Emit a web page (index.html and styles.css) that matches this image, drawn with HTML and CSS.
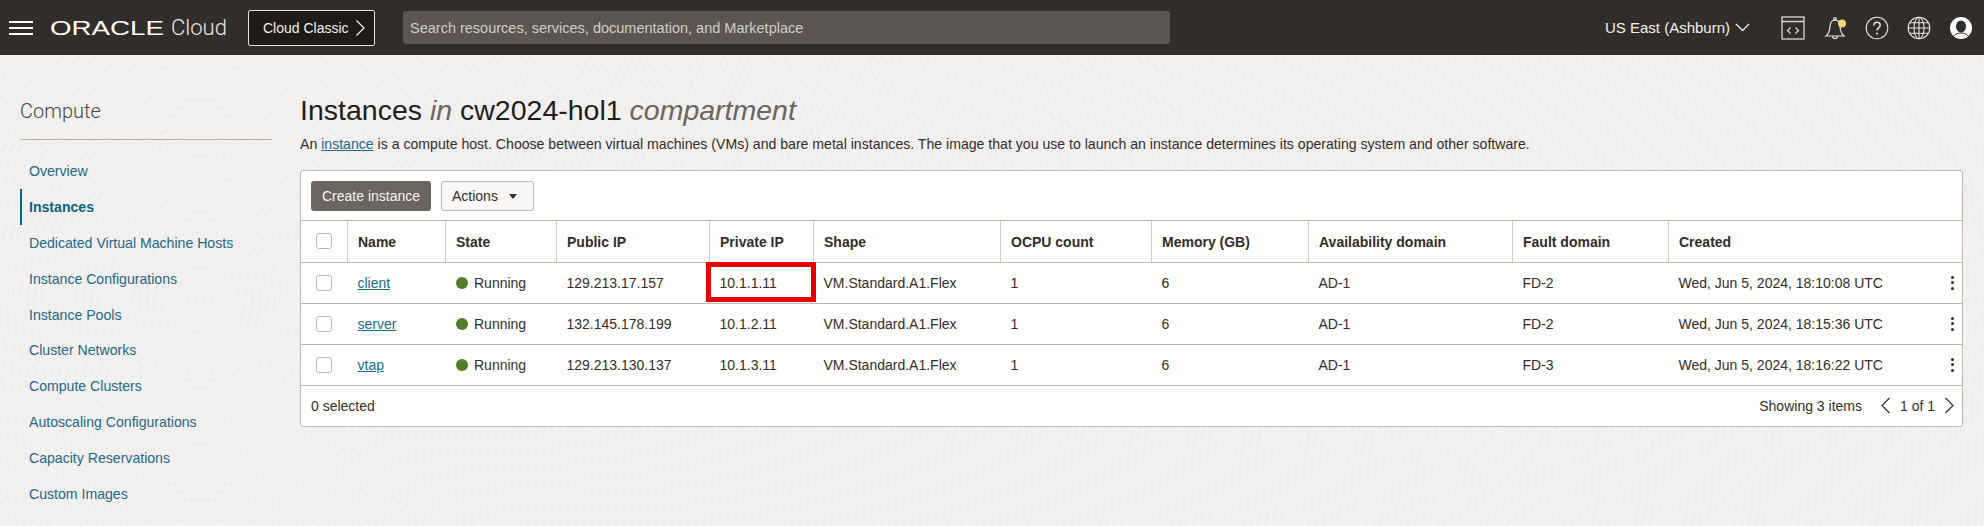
FILE: index.html
```html
<!DOCTYPE html>
<html>
<head>
  <meta charset="UTF-8">
  <title>Instances | Oracle Cloud</title>
  <link rel="stylesheet" href="styles.css">
</head>
<body>
  <header class="topbar">
    <button class="menu-btn" aria-label="Menu"><span></span><span></span><span></span></button>
    <div class="brand">
      <span class="brand-box"><span class="brand-oracle">ORACLE</span></span>
      <span class="brand-cloud">Cloud</span>
    </div>
    <button class="classic-btn">Cloud Classic
      <svg width="10" height="18" viewBox="0 0 10 18"><path d="M1.5 1.5 9 9l-7.500 7.500" fill="none" stroke="#f2f1ef" stroke-width="1.300"/></svg>
    </button>
    <div class="search">Search resources, services, documentation, and Marketplace</div>
    <div class="region">US East (Ashburn)
      <svg width="15" height="9" viewBox="0 0 15 9"><path d="M1 1l6.500 6.500L14 1" fill="none" stroke="#f2f1ef" stroke-width="1.300"/></svg>
    </div>
    <div class="top-icons">
      <svg class="ic-code" width="24" height="24" viewBox="0 0 24 24" fill="none" stroke="#d9d7d4" stroke-width="1.300">
        <rect x="1" y="1" width="22" height="22"/><path d="M1 5.500h22M9.500 11.500 6.500 14.500l3 3M14.500 11.500l3 3-3 3"/>
      </svg>
      <svg class="ic-bell" width="24" height="24" viewBox="0 0 24 24" fill="none" stroke="#e8e6e3" stroke-width="1.200">
        <path d="M2 20c2-1.500 3-3 3.500-6l.7-5c.5-3 2.500-5 4.800-5s4.300 2 4.800 5l.7 5c.5 3 1.500 4.500 3.500 6z"/>
        <circle cx="11" cy="2.800" r="1.300"/><path d="M8.500 20a2.500 2.500 0 0 0 5 0"/>
        <circle cx="18" cy="7.500" r="4" fill="#f5d77e" stroke="none"/>
      </svg>
      <svg class="ic-help" width="24" height="24" viewBox="0 0 24 24" fill="none" stroke="#e8e6e3" stroke-width="1.100">
        <circle cx="12" cy="12" r="10.800"/>
        <path d="M8.800 9.500c0-2 1.400-3.200 3.200-3.200s3.200 1.200 3.200 3c0 2.500-3.200 2.700-3.200 5.300" stroke-width="1.400"/>
        <circle cx="12" cy="17.600" r="1" fill="#e8e6e3" stroke="none"/>
      </svg>
      <svg class="ic-globe" width="24" height="24" viewBox="0 0 24 24" fill="none" stroke="#e8e6e3" stroke-width="1.100">
        <circle cx="12" cy="12" r="10.800"/><ellipse cx="12" cy="12" rx="5" ry="10.800"/>
        <path d="M1.200 12h21.600M2.600 6.800h18.800M2.600 17.200h18.800M12 1.200v21.600"/>
      </svg>
      <svg class="ic-user" width="24" height="24" viewBox="0 0 24 24">
        <circle cx="12" cy="12" r="11" fill="#fff"/>
        <ellipse cx="12" cy="10.500" rx="5" ry="6" fill="#312d2a"/>
        <path d="M4.800 20c1.500-2 4-3 7.200-3s5.700 1 7.200 3" fill="none" stroke="#312d2a" stroke-width="1"/>
      </svg>
    </div>
  </header>

  <div class="layout">
    <aside class="sidebar">
      <h2>Compute</h2>
      <nav class="side-nav">
        <a href="#">Overview</a>
        <a href="#" class="active">Instances</a>
        <a href="#">Dedicated Virtual Machine Hosts</a>
        <a href="#">Instance Configurations</a>
        <a href="#">Instance Pools</a>
        <a href="#">Cluster Networks</a>
        <a href="#">Compute Clusters</a>
        <a href="#">Autoscaling Configurations</a>
        <a href="#">Capacity Reservations</a>
        <a href="#">Custom Images</a>
      </nav>
    </aside>

    <main class="content">
      <h1>Instances <em>in</em> cw2024-hol1 <em>compartment</em></h1>
      <p class="intro">An <a href="#">instance</a> is a compute host. Choose between virtual machines (VMs) and bare metal instances. The image that you use to launch an instance determines its operating system and other software.</p>

      <section class="card">
        <div class="toolbar">
          <button class="btn-primary">Create instance</button>
          <button class="btn-actions">Actions <i class="caret"></i></button>
        </div>
        <table>
          <colgroup>
            <col class="c-check"><col class="c-name"><col class="c-state"><col class="c-public"><col class="c-private"><col class="c-shape"><col class="c-ocpu"><col class="c-mem"><col class="c-avail"><col class="c-fault"><col class="c-created">
          </colgroup>
          <thead>
            <tr>
              <th><span class="check"></span></th>
              <th>Name</th><th>State</th><th>Public IP</th><th>Private IP</th><th>Shape</th><th>OCPU count</th><th>Memory (GB)</th><th>Availability domain</th><th>Fault domain</th><th>Created</th>
            </tr>
          </thead>
          <tbody>
            <tr>
              <td><span class="check"></span></td>
              <td><a href="#">client</a></td>
              <td><i class="dot"></i>Running</td>
              <td>129.213.17.157</td>
              <td class="marked">10.1.1.11<span class="red-box"></span></td>
              <td>VM.Standard.A1.Flex</td><td>1</td><td>6</td><td>AD-1</td><td>FD-2</td>
              <td class="created">Wed, Jun 5, 2024, 18:10:08 UTC<span class="kebab"><i></i><i></i><i></i></span></td>
            </tr>
            <tr>
              <td><span class="check"></span></td>
              <td><a href="#">server</a></td>
              <td><i class="dot"></i>Running</td>
              <td>132.145.178.199</td>
              <td>10.1.2.11</td>
              <td>VM.Standard.A1.Flex</td><td>1</td><td>6</td><td>AD-1</td><td>FD-2</td>
              <td class="created">Wed, Jun 5, 2024, 18:15:36 UTC<span class="kebab"><i></i><i></i><i></i></span></td>
            </tr>
            <tr>
              <td><span class="check"></span></td>
              <td><a href="#">vtap</a></td>
              <td><i class="dot"></i>Running</td>
              <td>129.213.130.137</td>
              <td>10.1.3.11</td>
              <td>VM.Standard.A1.Flex</td><td>1</td><td>6</td><td>AD-1</td><td>FD-3</td>
              <td class="created">Wed, Jun 5, 2024, 18:16:22 UTC<span class="kebab"><i></i><i></i><i></i></span></td>
            </tr>
          </tbody>
        </table>
        <div class="card-foot">
          <span>0 selected</span>
          <div class="pager">
            <span class="showing">Showing 3 items</span>
            <svg width="11" height="17" viewBox="0 0 11 17"><path d="M9.500 1 2 8.500 9.500 16" fill="none" stroke="#312d2a" stroke-width="1.200"/></svg>
            <span>1 of 1</span>
            <svg width="11" height="17" viewBox="0 0 11 17"><path d="M1.500 1 9 8.500 1.500 16" fill="none" stroke="#312d2a" stroke-width="1.200"/></svg>
          </div>
        </div>
      </section>
    </main>
  </div>
</body>
</html>
```

FILE: styles.css
```css
* {
  box-sizing: border-box;
}

html, body {
  height: 100%;
}

body {
  margin: 0;
  overflow: hidden;
  font-family: "Liberation Sans", Arial, sans-serif;
  font-size: 14px;
  color: #312d2a;
  background-color: #f1efed;
  background-image:
    repeating-radial-gradient(circle at 200px 300px, rgba(255, 255, 255, 0.3) 0 1px, transparent 1px 7px),
    repeating-radial-gradient(circle at 1500px 480px, rgba(255, 255, 255, 0.25) 0 1px, transparent 1px 8px);
}

a {
  color: #1c6a8f;
}

button {
  font-family: inherit;
}

/* top bar */
.topbar {
  display: flex;
  align-items: center;
  height: 55px;
  background: #312d2a;
  color: #f2f1ef;
}

.menu-btn {
  display: flex;
  flex-direction: column;
  gap: 4px;
  width: 24px;
  margin-left: 9px;
  padding: 0;
  background: none;
  border: none;
}

.menu-btn span {
  height: 2px;
  background: #fff;
}

.brand {
  display: flex;
  align-items: center;
  width: 198px;
  margin-left: 17px;
}

.brand-box {
  display: block;
  width: 121px;
}

.brand-oracle {
  display: inline-block;
  font-size: 21px;
  line-height: 24px;
  color: #fff;
  transform: scaleX(1.32);
  transform-origin: left center;
}

.brand-cloud {
  font-family: Roboto, sans-serif;
  font-weight: 300;
  font-size: 22px;
  color: #e9e7e4;
}

.classic-btn {
  display: flex;
  align-items: center;
  gap: 6px;
  width: 127px;
  height: 36px;
  padding: 0 0 0 14px;
  font-size: 14px;
  color: #f2f1ef;
  background: #1f1b18;
  border: 1px solid #e4e2df;
  border-radius: 2px;
}

.search {
  display: flex;
  align-items: center;
  width: 767px;
  height: 33px;
  margin-left: 28px;
  padding-left: 7px;
  font-size: 14.500px;
  color: #d0cdc9;
  background: #5b5652;
  border-radius: 3px;
}

.region {
  display: flex;
  align-items: center;
  gap: 5px;
  margin-left: auto;
  font-size: 15px;
  color: #f2f1ef;
}

.top-icons {
  display: flex;
  align-items: center;
  gap: 18px;
  margin: 0 11px 0 31px;
}

.top-icons svg {
  display: block;
}

.ic-bell {
  margin-left: 1px;
}

.ic-help {
  margin-left: -1px;
}

/* sidebar and page */
.layout {
  display: flex;
}

.sidebar {
  flex: none;
  width: 252px;
  margin-left: 20px;
}

.sidebar h2 {
  margin: 0;
  padding: 43px 0 15px;
  font-family: Roboto, sans-serif;
  font-weight: 300;
  font-size: 20px;
  line-height: 26px;
  color: #4a4642;
  border-bottom: 1px solid #b8b2ab;
}

.side-nav {
  margin-top: 13px;
}

.side-nav a {
  display: block;
  height: 35.900px;
  padding-left: 9px;
  line-height: 36px;
  text-decoration: none;
  font-size: 14.100px;
  color: #24688a;
}

.side-nav a.active {
  font-weight: bold;
  color: #0f6186;
  border-left: 2px solid #00688c;
  padding-left: 7px;
}

.content {
  flex: none;
  width: 1663px;
  margin-left: 28px;
}

h1 {
  margin: 0;
  padding-top: 37px;
  font-size: 28.500px;
  font-weight: normal;
  line-height: 36px;
  color: #201d1b;
}

h1 em {
  color: #6b6560;
}

.intro {
  margin: 6px 0 16px;
  font-size: 14.100px;
  line-height: 20px;
  color: #312d2a;
}

/* table card */
.card {
  background: #fffffe;
  border: 1px solid #bcb8b3;
  border-radius: 3px;
}

.toolbar {
  display: flex;
  gap: 10px;
  height: 50px;
  padding: 10px 10px 0;
  border-bottom: 1px solid #bcb8b3;
}

.btn-primary {
  width: 120px;
  height: 30px;
  padding: 0;
  font-size: 14px;
  color: #f5f3f1;
  background: #6b6560;
  border: none;
  border-radius: 3px;
}

.btn-actions {
  display: flex;
  align-items: center;
  gap: 11px;
  width: 93px;
  height: 30px;
  padding: 0 0 0 10px;
  font-size: 14px;
  color: #312d2a;
  background: #f9f8f7;
  border: 1px solid #bcb8b3;
  border-radius: 3px;
}

.caret {
  width: 0;
  height: 0;
  border-left: 4.500px solid transparent;
  border-right: 4.500px solid transparent;
  border-top: 5px solid #312d2a;
}

table {
  width: 100%;
  table-layout: fixed;
  border-collapse: collapse;
}

.c-check { width: 46px; }
.c-name { width: 98px; }
.c-state { width: 111px; }
.c-public { width: 153px; }
.c-private { width: 104px; }
.c-shape { width: 187px; }
.c-ocpu { width: 151px; }
.c-mem { width: 157px; }
.c-avail { width: 204px; }
.c-fault { width: 156px; }

th, td {
  height: 41px;
  padding: 0 10px 0 10.500px;
  text-align: left;
  font-size: 14px;
  border-bottom: 1px solid #bcb8b3;
  white-space: nowrap;
}

th {
  padding-top: 2px;
  font-weight: bold;
  color: #312d2a;
  border-left: 1px solid #d0cdc9;
}

th:first-child {
  border-left: none;
}

th:first-child,
td:first-child {
  padding: 0 0 0 15px;
}

.check {
  display: block;
  width: 16px;
  height: 16px;
  background: #fff;
  border: 1px solid #bcb8b3;
  border-radius: 3px;
}

.dot {
  display: inline-block;
  width: 12px;
  height: 12px;
  margin: 0 6px 0 0.500px;
  vertical-align: -1px;
  background: #4f7d28;
  border-radius: 50%;
}

.marked,
.created {
  position: relative;
}

/* the annotation drawn over the screenshot */
.red-box {
  position: absolute;
  top: -1px;
  left: -3px;
  width: 110px;
  height: 40px;
  border: 5px solid #e60000;
}

.kebab {
  position: absolute;
  top: 13px;
  right: 8px;
  display: flex;
  flex-direction: column;
  gap: 2.500px;
}

.kebab i {
  display: block;
  width: 3px;
  height: 3px;
  background: #312d2a;
  border-radius: 50%;
}

.card-foot {
  display: flex;
  align-items: center;
  justify-content: space-between;
  height: 40px;
  padding: 0 7px 0 10px;
}

.pager {
  display: flex;
  align-items: center;
  gap: 9px;
}

.showing {
  margin-right: 9px;
}
```
